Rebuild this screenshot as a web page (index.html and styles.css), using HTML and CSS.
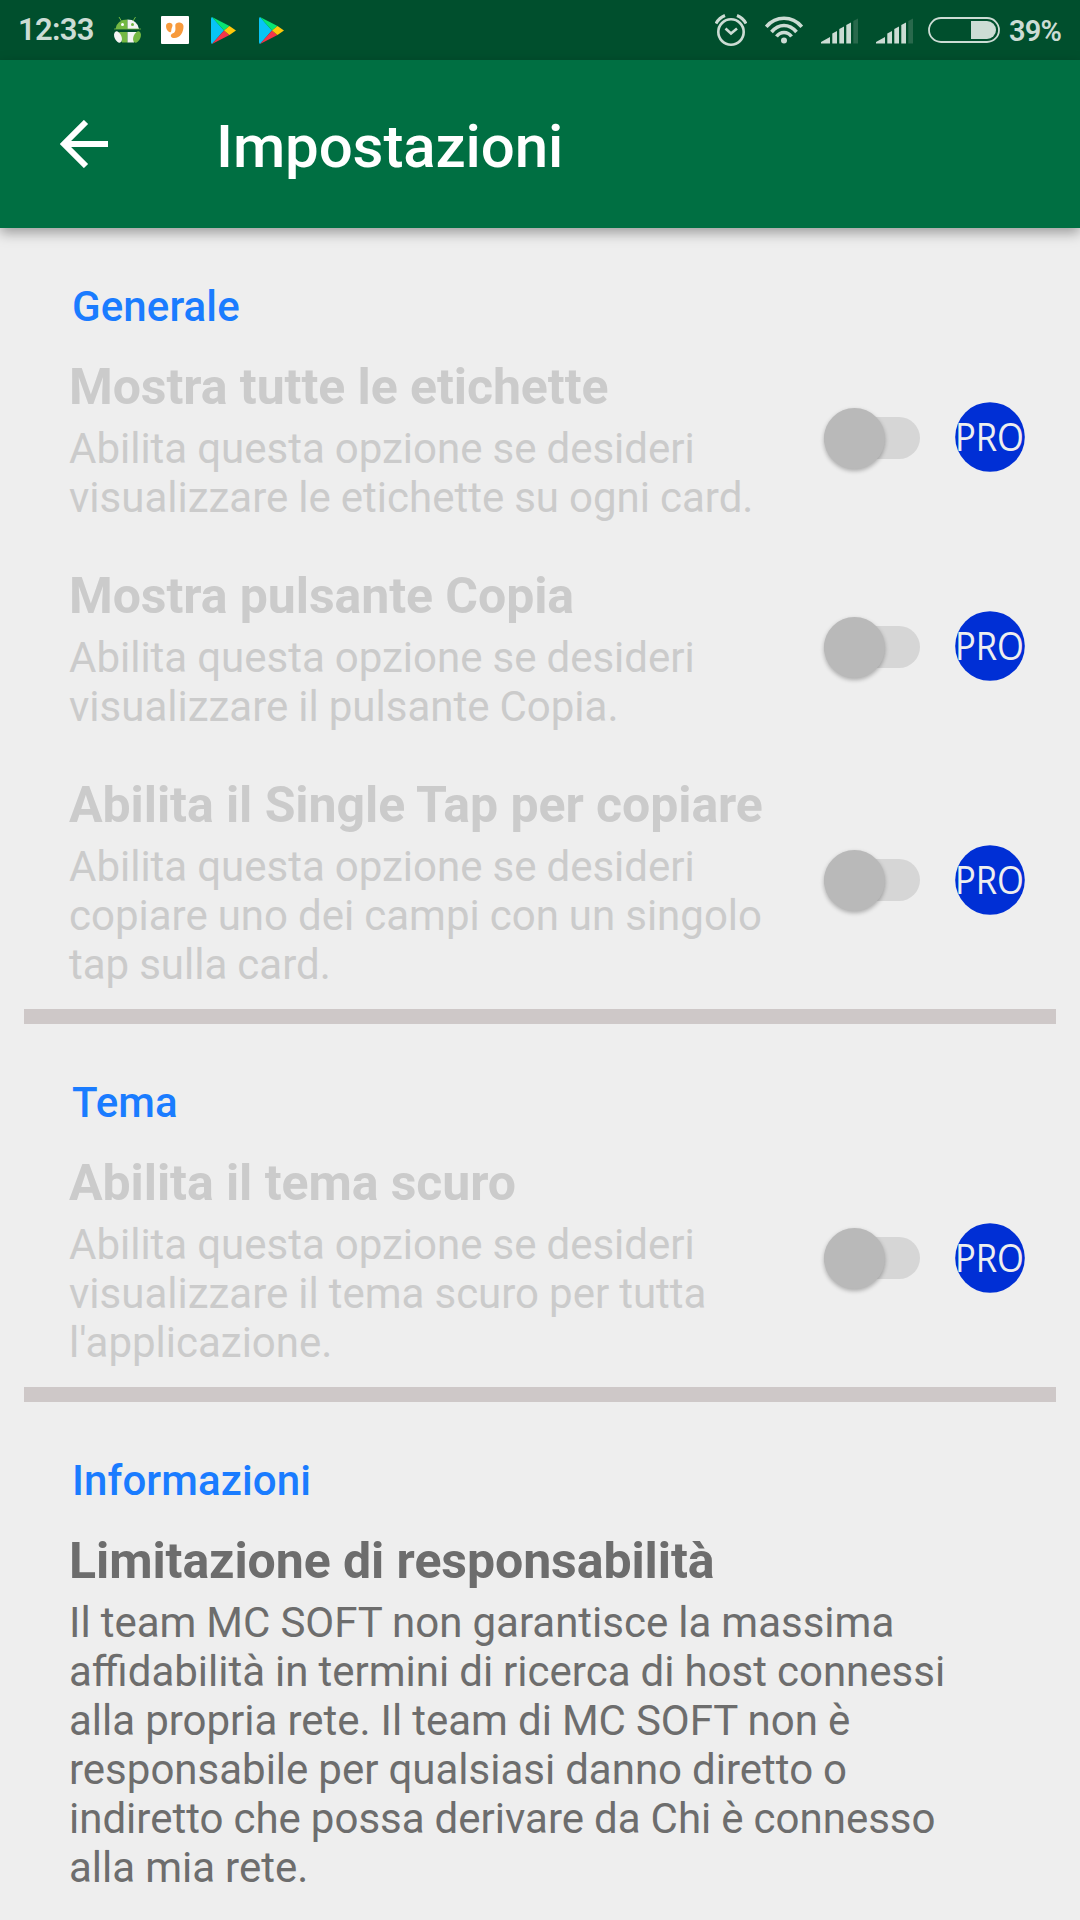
FILE: index.html
```html
<!DOCTYPE html>
<html lang="it">
<head>
<meta charset="utf-8">
<title>Impostazioni</title>
<link rel="stylesheet" href="styles.css">
</head>
<body>
<svg width="0" height="0" class="defs">
  <symbol id="play" viewBox="0 0 25 27">
    <path d="M1 0L13 13.500L1 27Q0 26.500 0 25V2Q0 .5 1 0Z" fill="#08c4f5"/>
    <path d="M1 0L18.500 9L13 13.500Z" fill="#07e573"/>
    <path d="M1 27L18.500 18L13 13.500Z" fill="#f5354a"/>
    <path d="M18.500 9L25 13.500L18.500 18L13 13.500Z" fill="#ffc80a"/>
  </symbol>
  <symbol id="signal" viewBox="0 0 38 26">
    <g fill="#ccdcd4"><path d="M0 25.500V24L9 19V25.500ZM11.300 15.500L16 13V25.500H11.300ZM18.300 11L23 8.500V25.500H18.300ZM25.300 7L30 4.500V25.500H25.300Z"/></g>
    <path d="M32.300 3L37 .5V25.500H32.300Z" fill="#29694c"/>
  </symbol>
</svg>

<header class="status">
  <span class="clock">12:33</span>
  <div class="notes">
    <svg width="28" height="28" viewBox="0 0 28 28">
      <path d="M5 1L8 6M21.500 1L18.500 6" stroke="#74b843" stroke-width="1" fill="none"/>
      <path d="M1.500 13Q3 3.500 13.500 3.500V13Z" fill="#74b843"/>
      <path d="M13.500 3.500Q23 3.500 25 13H13.500Z" fill="#f4f4f4"/>
      <circle cx="8.500" cy="8.500" r="1.500" fill="#fff"/><circle cx="18.500" cy="8.500" r="1.500" fill="#74b843"/>
      <path d="M0 13H27" stroke="#74b843" stroke-width=".8"/>
      <path d="M5 16H13.500V26.500H8Z" fill="#74b843"/><path d="M13.500 16H23L20 26.500H13.500Z" fill="#f4f4f4"/>
      <ellipse cx="4" cy="21" rx="3.500" ry="6" transform="rotate(-22 4 21)" fill="#f4f4f4"/>
      <ellipse cx="23" cy="21" rx="3.500" ry="6" transform="rotate(22 23 21)" fill="#74b843"/>
    </svg>
    <svg width="28" height="28" viewBox="0 0 28 28">
      <rect width="28" height="28" rx="1" fill="#fff"/>
      <path d="M5 10C5 6 11.500 5.800 11.500 9.500C11.500 11 10.300 12 10.300 14.500C10.300 16.800 8.500 16.600 7.200 15.300C5.800 14 5 12 5 10Z" fill="#f79a3c"/>
      <path d="M14.300 9C14.500 5.500 22.500 5.500 22.500 10.500C22.500 16.500 19 22 13.500 22C9 22 8.800 18.200 12 17.200C15.500 16 14.200 12 14.300 9Z" fill="#f79a3c"/>
    </svg>
    <svg width="25" height="27"><use href="#play"/></svg>
    <svg width="25" height="27"><use href="#play"/></svg>
  </div>
  <div class="system">
    <svg width="32" height="32" viewBox="0 0 32 32" fill="none" stroke="#ccdcd4">
      <circle cx="16" cy="18" r="12.700" stroke-width="2.600"/>
      <path d="M10.500 14.500L16 19.500L22 14.500" stroke-width="2.600"/>
      <path d="M1 9.500Q4 4 10 1.500M31 9.500Q28 4 22 1.500" stroke-width="3"/>
    </svg>
    <svg class="wifi" width="38" height="28" viewBox="0 0 38 28" fill="none" stroke="#ccdcd4" stroke-width="3.600">
      <path d="M1.200 10.800Q8.500 2.300 19 2.300T36.800 10.800"/>
      <path d="M6.500 16Q12 9.500 19 9.500T31.500 16"/>
      <path d="M11.500 20.500Q14.500 16.500 19 16.500T26.500 20.500"/>
      <circle cx="19" cy="24.500" r="3" fill="#ccdcd4" stroke="none"/>
    </svg>
    <svg class="signal" width="38" height="26"><use href="#signal"/></svg>
    <svg class="signal" width="38" height="26"><use href="#signal"/></svg>
    <svg class="battery" width="72" height="26" viewBox="0 0 72 26">
      <rect x="1" y="1" width="70" height="24" rx="12" fill="none" stroke="#ccdcd4" stroke-width="1.800"/>
      <path d="M43 4H59A9 9 0 0 1 59 22H43Z" fill="#ccdcd4"/>
    </svg>
    <span class="percent">39%</span>
  </div>
</header>

<div class="appbar">
  <svg width="48" height="48" viewBox="0 0 48 48" fill="none" stroke="#fff" stroke-width="6">
    <path d="M48 24H5M26 2L4 24L26 46"/>
  </svg>
  <h1>Impostazioni</h1>
</div>

<main>
  <section>
    <h2>Generale</h2>
    <div class="row">
      <div class="text"><h3>Mostra tutte le etichette</h3><p>Abilita questa opzione se desideri<br>visualizzare le etichette su ogni card.</p></div>
      <div class="switch"><i></i></div>
      <svg class="pro" viewBox="0 0 70 70"><circle cx="35" cy="35" r="34.800"/><text x="0" y="48.500" textLength="69" lengthAdjust="spacingAndGlyphs">PRO</text></svg>
    </div>
    <div class="row">
      <div class="text"><h3>Mostra pulsante Copia</h3><p>Abilita questa opzione se desideri<br>visualizzare il pulsante Copia.</p></div>
      <div class="switch"><i></i></div>
      <svg class="pro" viewBox="0 0 70 70"><circle cx="35" cy="35" r="34.800"/><text x="0" y="48.500" textLength="69" lengthAdjust="spacingAndGlyphs">PRO</text></svg>
    </div>
    <div class="row tall">
      <div class="text"><h3>Abilita il Single Tap per copiare</h3><p>Abilita questa opzione se desideri<br>copiare uno dei campi con un singolo<br>tap sulla card.</p></div>
      <div class="switch"><i></i></div>
      <svg class="pro" viewBox="0 0 70 70"><circle cx="35" cy="35" r="34.800"/><text x="0" y="48.500" textLength="69" lengthAdjust="spacingAndGlyphs">PRO</text></svg>
    </div>
  </section>
  <section>
    <h2>Tema</h2>
    <div class="row tall">
      <div class="text"><h3>Abilita il tema scuro</h3><p>Abilita questa opzione se desideri<br>visualizzare il tema scuro per tutta<br>l'applicazione.</p></div>
      <div class="switch"><i></i></div>
      <svg class="pro" viewBox="0 0 70 70"><circle cx="35" cy="35" r="34.800"/><text x="0" y="48.500" textLength="69" lengthAdjust="spacingAndGlyphs">PRO</text></svg>
    </div>
  </section>
  <section>
    <h2>Informazioni</h2>
    <div class="row info">
      <div class="text"><h3>Limitazione di responsabilità</h3><p>Il team MC SOFT non garantisce la massima<br>affidabilità in termini di ricerca di host connessi<br>alla propria rete. Il team di MC SOFT non è<br>responsabile per qualsiasi danno diretto o<br>indiretto che possa derivare da Chi è connesso<br>alla mia rete.</p></div>
    </div>
  </section>
</main>
</body>
</html>
```
FILE: styles.css
```css
* { box-sizing: border-box; margin: 0; padding: 0; }
body {
  width: 1080px;
  height: 1920px;
  overflow: hidden;
  background: #eee;
  font-family: Roboto, sans-serif;
}
svg { display: block; flex: none; }
.defs { position: absolute; }

.status {
  display: flex;
  align-items: center;
  height: 60px;
  padding-left: 18px;
  background: #004f2d;
  color: #ccdcd4;
  font-weight: 600;
}
.clock { width: 96px; font-size: 31px; line-height: 62px; letter-spacing: -.7px; white-space: nowrap; }
.notes { display: flex; align-items: center; width: 601px; }
.notes svg:nth-child(2) { margin-left: 19px; }
.notes svg:nth-child(3) { margin-left: 22px; }
.notes svg:nth-child(4) { margin-left: 23px; }
.system { display: flex; align-items: center; height: 60px; }
.wifi { margin-left: 18px; }
.signal { margin: 2px 0 0 18px; }
.signal + .signal { margin-left: 17px; }
.battery { margin-left: 14px; }
.percent { margin: 1px 0 0 9px; font-size: 29px; letter-spacing: -.8px; }

.appbar {
  display: flex;
  align-items: center;
  height: 168px;
  padding-left: 60px;
  background: #006f42;
  color: #fff;
  box-shadow: 0 5px 12px rgba(0, 0, 0, .34);
}
.appbar h1 { margin: 5px 0 0 108px; font-size: 60px; font-weight: 500; line-height: 70px; letter-spacing: -.1px; }

section { border-bottom: 15px solid #cec8c8; margin: 0 24px; }
section:last-child { border: 0; }
h2 {
  height: 105px;
  padding: 54px 0 0 48px;
  color: #1a7cff;
  font-size: 42px;
  font-weight: 500;
  line-height: 49px;
  letter-spacing: .1px;
}
.row { display: flex; align-items: center; color: #cbcbcb; }
.text { flex: none; width: 800px; padding: 25px 0 20px 45px; white-space: nowrap; }
h3 { margin-bottom: 7px; font-size: 50px; font-weight: 700; line-height: 59px; letter-spacing: -.07px; }
p { font-size: 42px; line-height: 49px; word-spacing: -.4px; }
.info { color: #6d6d6d; }

.switch {
  flex: none;
  width: 96px;
  height: 42px;
  margin-right: 35px;
  border-radius: 21px;
  background: #d6d6d6;
}
.switch i {
  display: block;
  width: 61px;
  height: 61px;
  margin-top: -9px;
  border-radius: 50%;
  background: #b9b9b9;
  box-shadow: 0 2px 4px rgba(0, 0, 0, .28);
}
.pro { width: 70px; height: 70px; margin-bottom: 2px; overflow: visible; }
.tall .pro { margin-bottom: 0; }
.pro circle { fill: #002fd5; }
.pro text { font: 400 38px "Open Sans", sans-serif; fill: #eee; }
```
